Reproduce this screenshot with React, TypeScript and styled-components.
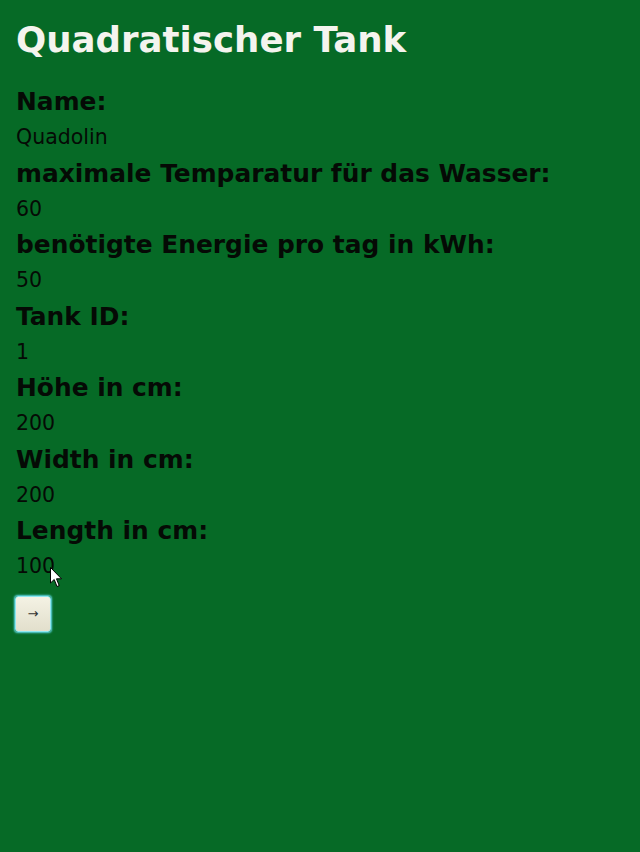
import React from "react";
import styled, { createGlobalStyle } from "styled-components";

const Global = createGlobalStyle`
  html, body { margin: 0; padding: 0; background: #066a26; }
  body { min-height: 852px; }
`;

const Page = styled.main`
  display: flex;
  flex-direction: column;
  align-items: flex-start;
  padding: 16px 16px;
  min-height: 852px;
  box-sizing: border-box;
  background: #066a26;
  position: relative;
`;

const Title = styled.h1`
  margin: 0 0 19px 0;
  font-family: "DejaVu Sans", sans-serif;
  font-weight: bold;
  font-size: 35.6px;
  line-height: 48px;
  color: #f4f4ee;
`;

const Label = styled.div`
  font-family: "DejaVu Sans", sans-serif;
  font-weight: bold;
  font-size: 24.9px;
  line-height: 38px;
  color: #050a05;
`;

const Value = styled.div`
  font-family: "DejaVu Sans", sans-serif;
  font-size: 20.5px;
  line-height: 33.5px;
  color: #050a05;
`;

const NextButton = styled.button`
  margin-top: 12px;
  margin-left: -1px;
  width: 36px;
  height: 36px;
  border-radius: 3px;
  border: 1px solid #8fe8f0;
  box-shadow: 0 0 2px 1px #5fd6e6;
  background: linear-gradient(#f4f2e4, #e2dfcc);
  font-family: "DejaVu Sans", sans-serif;
  font-size: 13px;
  color: #333;
  padding: 0;
  cursor: pointer;
`;

const Cursor = styled.svg`
  position: absolute;
  left: 50px;
  top: 567px;
`;

const fields: [string, string][] = [
  ["Name:", "Quadolin"],
  ["maximale Temparatur für das Wasser:", "60"],
  ["benötigte Energie pro tag in kWh:", "50"],
  ["Tank ID:", "1"],
  ["Höhe in cm:", "200"],
  ["Width in cm:", "200"],
  ["Length in cm:", "100"],
];

export default function App() {
  return (
    <>
      <Global />
      <Page>
        <Title>Quadratischer Tank</Title>
        {fields.map(([l, v]) => (
          <React.Fragment key={l}>
            <Label>{l}</Label>
            <Value>{v}</Value>
          </React.Fragment>
        ))}
        <NextButton>→</NextButton>
        <Cursor width="13" height="21" viewBox="0 0 13 21">
          <path d="M0.5 0.5 L0.5 16 L4.2 12.5 L7 19.5 L9.2 18.6 L6.5 11.8 L11.5 11.8 Z" fill="#fff" stroke="#000" strokeWidth="1" />
        </Cursor>
      </Page>
    </>
  );
}
